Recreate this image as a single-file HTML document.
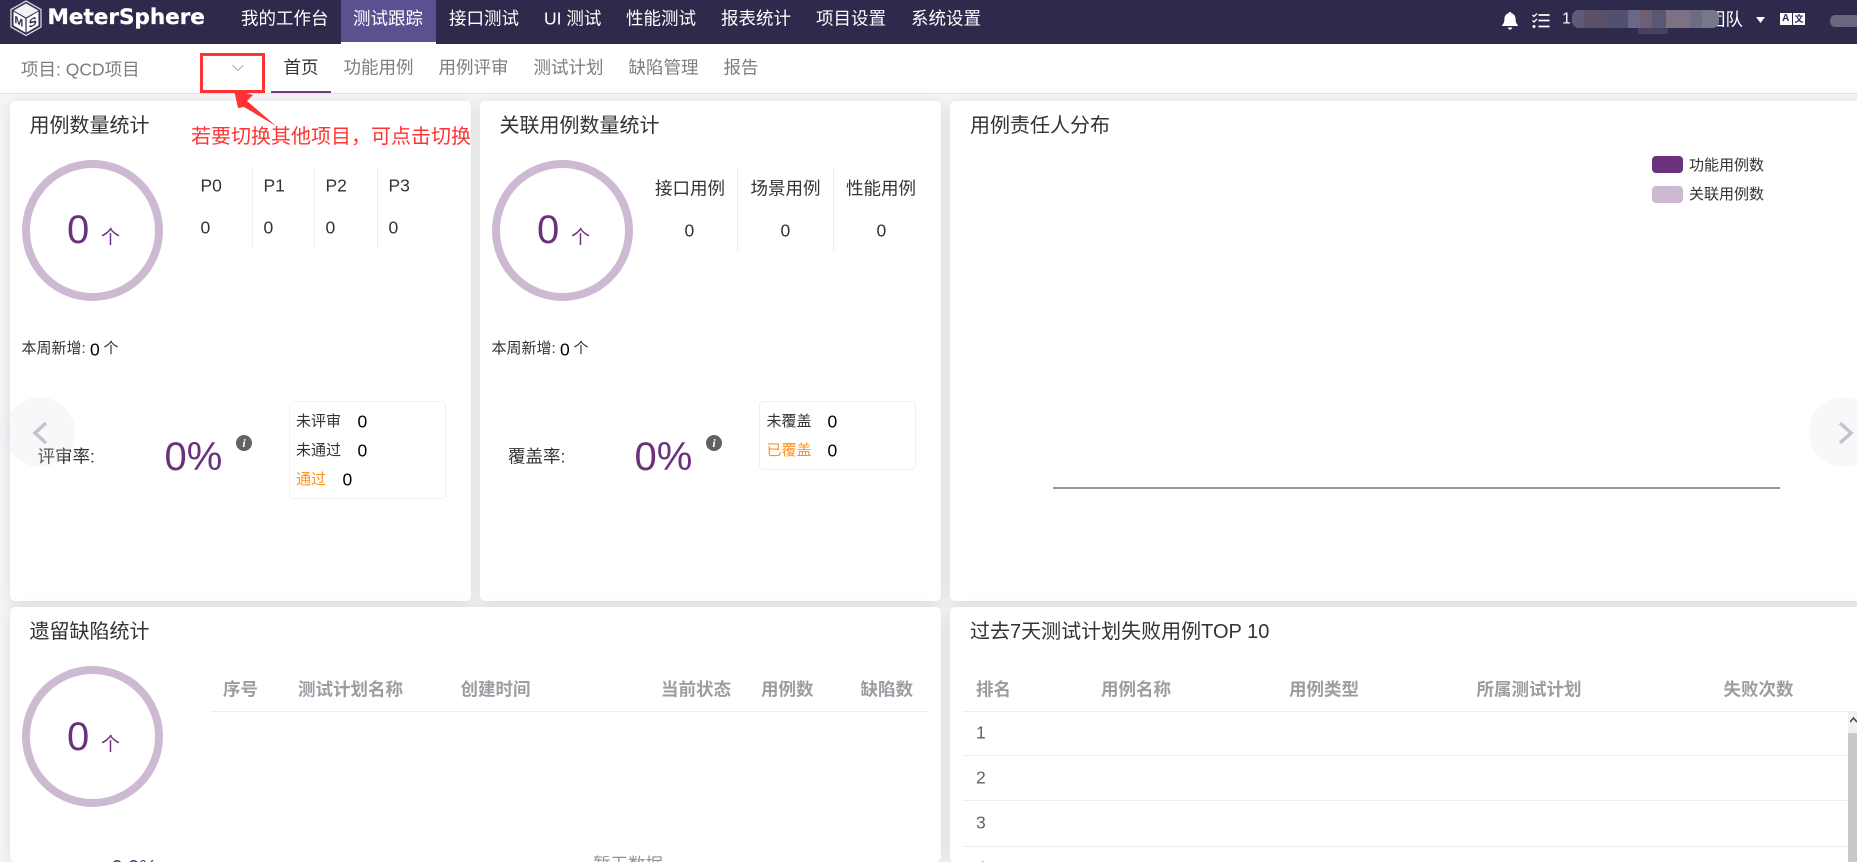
<!DOCTYPE html>
<html lang="zh-CN">
<head>
<meta charset="utf-8">
<title>MeterSphere</title>
<style>
html,body{margin:0;padding:0;width:1857px;height:862px;overflow:hidden;background:#f5f5f7;}
body{font-family:"Liberation Sans","Noto Sans CJK SC",sans-serif;font-size:17.5px;color:#333;}
#root{position:absolute;left:0;top:0;width:1857px;height:862px;overflow:hidden;background:#f5f5f7;}
.t{position:absolute;white-space:nowrap;transform:translateY(-50%);line-height:1.2;}
.b{position:absolute;}
.hd{left:0;top:0;width:1857px;height:44px;background:#2e2a4b;}
.n{color:#fff;font-size:17.5px;top:18.5px;}
.sub{left:0;top:44px;width:1857px;height:49px;background:#fff;border-bottom:1px solid #e4e4e7;}
.g{color:#7d7d82;}
.card{background:#fff;border-radius:5px;box-shadow:0 2.5px 15px rgba(0,0,0,.1);}
.ti{font-size:20px;color:#333;}
.ring{width:125px;height:125px;border:8px solid #cdb9d2;border-radius:50%;}
.pp{color:#6c317c;}
.big{font-size:40px;color:#6c317c;}
.ge{font-size:19px;color:#6c317c;}
.dv{width:1px;background:#eeeef0;}
.sm{font-size:15px;color:#333;}
.v{font-size:17.5px;color:#000;}
.box{border:1px solid #efeff5;border-radius:5px;background:#fff;box-sizing:border-box;}
.or{font-size:15px;color:#f7931e;}
.th{font-weight:bold;color:#9b9da3;font-size:17.5px;top:689.5px;}
.ln{height:1px;background:#ebeef5;}
.i{width:16px;height:16px;border-radius:50%;background:#606266;color:#fff;text-align:center;font:italic bold 12px/16px "Liberation Serif",serif;}
.nav{width:70px;height:70px;border-radius:50%;background:rgba(225,225,232,.22);}
.bl{position:absolute;top:0;height:100%;}
</style>
</head>
<body>
<div id="root">
<!-- header -->
<div class="b hd"></div>
<div class="b" style="left:341px;top:0;width:95px;height:42px;background:#5a5290;"></div>
<div class="b" style="left:341px;top:42px;width:95px;height:2px;background:#fff;"></div>
<svg class="b" style="left:8px;top:0" width="36" height="37" viewBox="0 0 36 37">
<polygon points="18,1 33,9.500 33,27 18,35.500 3,27 3,9.500" fill="none" stroke="#d6d5de" stroke-width="1.300"/>
<polygon points="18,3.500 30.500,10.500 18,17.500 5.500,10.500" fill="#f2f1f5"/>
<polygon points="5.500,11.500 17.400,18.500 17.400,32.500 5.500,25.500" fill="#fff"/>
<polygon points="30.500,11.500 18.600,18.500 18.600,32.500 30.500,25.500" fill="#fff"/>
<text transform="matrix(1 .55 0 1 6.500 22.500)" font-family="Liberation Sans" font-weight="bold" font-size="10.500" fill="#2e2a4b">M</text>
<text transform="matrix(1 -.55 0 1 20.800 28.500)" font-family="Liberation Sans" font-weight="bold" font-size="12" fill="#2e2a4b">S</text>
</svg>
<span class="t" style="left:47.500px;top:17.500px;color:#fff;font-family:'DejaVu Sans',sans-serif;font-weight:bold;font-size:21.500px;-webkit-text-stroke:.35px #fff;">MeterSphere</span>
<span class="t n" style="left:241px">我的工作台</span>
<span class="t n" style="left:353px">测试跟踪</span>
<span class="t n" style="left:449px">接口测试</span>
<span class="t n" style="left:544px">UI 测试</span>
<span class="t n" style="left:626px">性能测试</span>
<span class="t n" style="left:721px">报表统计</span>
<span class="t n" style="left:816px">项目设置</span>
<span class="t n" style="left:911px">系统设置</span>

<svg class="b" style="left:1501px;top:11px" width="18" height="20" viewBox="0 0 18 20"><path d="M9 1c.8 0 1.4.6 1.4 1.3 2.7.7 4.2 3 4.2 5.7 0 3 .7 4.6 2.4 6.200v.8H1v-.8C2.700 12.600 3.400 11 3.400 8c0-2.700 1.500-5 4.200-5.700C7.600 1.600 8.200 1 9 1zM6.800 16.500h4.400C11 17.800 10.100 18.600 9 18.600S7 17.800 6.800 16.500z" fill="#fff"/></svg>
<svg class="b" style="left:1531px;top:12px" width="19" height="17" viewBox="0 0 19 17"><path d="M1.500 3l1.500 1.500L6 1.500M1.500 8.500L3 10l3-3" fill="none" stroke="#fff" stroke-width="1.300"/><circle cx="3" cy="14.500" r="1.500" fill="#fff"/><path d="M7.500 3h11M7.500 8.500h11M7.500 14.500h11" stroke="#fff" stroke-width="1.700"/></svg>
<span class="t" style="left:1562px;top:19px;color:#fff;font-size:16px;">1</span>
<span class="t" style="left:1708px;top:19.500px;color:#fff;font-size:17.500px;">团队</span>
<div class="b" style="left:1638px;top:24px;width:30px;height:10px;background:#454160;"></div>
<div class="b" style="left:1572px;top:10px;width:147px;height:18px;background:#5f5b77;border-radius:7px;overflow:hidden;">
<div class="bl" style="left:12px;width:22px;background:#5c5066"></div>
<div class="bl" style="left:34px;width:22px;background:#534f6e"></div>
<div class="bl" style="left:56px;width:12px;background:#6a6888"></div>
<div class="bl" style="left:68px;width:12px;background:#6e5f72"></div>
<div class="bl" style="left:80px;width:14px;background:#5a5674"></div>
<div class="bl" style="left:94px;width:24px;background:#7c7284"></div>
<div class="bl" style="left:118px;width:12px;background:#6e6c82"></div>
<div class="bl" style="left:130px;width:17px;background:#77778a"></div>
</div>
<svg class="b" style="left:1755px;top:16px" width="11" height="8" viewBox="0 0 11 8"><polygon points="1,1 10,1 5.500,7" fill="#fff"/></svg>
<div class="b" style="left:1780px;top:13px;width:11.500px;height:12px;background:#fff;color:#2e2a4b;font:bold 10px/12px 'Liberation Sans';text-align:center;">A</div>
<div class="b" style="left:1793px;top:13px;width:12px;height:12px;background:#fff;color:#2e2a4b;font:bold 9px/12px 'Noto Sans CJK SC';text-align:center;">文</div>
<div class="b" style="left:1830px;top:15px;width:27px;height:12px;background:#6a667f;border-radius:5px 0 0 5px;"></div>

<!-- subheader -->
<div class="b sub"></div>
<span class="t g" style="left:21px;top:70px">项目: QCD项目</span>
<span class="t" style="left:283.500px;top:68px;color:#333">首页</span>
<div class="b" style="left:271px;top:91px;width:60px;height:2px;background:#783887;"></div>
<span class="t g" style="left:343.500px;top:68px">功能用例</span>
<span class="t g" style="left:438.500px;top:68px">用例评审</span>
<span class="t g" style="left:533.500px;top:68px">测试计划</span>
<span class="t g" style="left:628.500px;top:68px">缺陷管理</span>
<span class="t g" style="left:723.500px;top:68px">报告</span>

<!-- card 1 -->
<div class="b card" style="left:10px;top:101px;width:460.500px;height:500px;"></div>
<span class="t ti" style="left:29.500px;top:125.500px">用例数量统计</span>
<div class="b ring" style="left:22px;top:160px"></div>
<span class="t big" style="left:67px;top:230px">0</span>
<span class="t ge" style="left:101px;top:239px">个</span>
<span class="t" style="left:200.500px;top:186px">P0</span>
<span class="t" style="left:263.500px;top:186px">P1</span>
<span class="t" style="left:325.500px;top:186px">P2</span>
<span class="t" style="left:388.500px;top:186px">P3</span>
<span class="t" style="left:200.500px;top:228px">0</span>
<span class="t" style="left:263.500px;top:228px">0</span>
<span class="t" style="left:325.500px;top:228px">0</span>
<span class="t" style="left:388.500px;top:228px">0</span>
<div class="b dv" style="left:252px;top:166px;height:83px"></div>
<div class="b dv" style="left:314px;top:166px;height:83px"></div>
<div class="b dv" style="left:377px;top:166px;height:83px"></div>
<span class="t sm" style="left:21.500px;top:349px">本周新增:</span>
<span class="t v" style="left:90px;top:350px">0</span>
<span class="t sm" style="left:103.500px;top:349px">个</span>
<span class="t" style="left:37.500px;top:457px">评审率:</span>
<span class="t big" style="left:164.500px;top:457px">0%</span>
<div class="b i" style="left:236px;top:435px">i</div>
<div class="b box" style="left:289px;top:401px;width:157px;height:98px"></div>
<span class="t sm" style="left:296px;top:421.500px">未评审</span><span class="t v" style="left:357.500px;top:422px">0</span>
<span class="t sm" style="left:296px;top:450.500px">未通过</span><span class="t v" style="left:357.500px;top:451px">0</span>
<span class="t or" style="left:296px;top:479.500px">通过</span><span class="t v" style="left:342.500px;top:480px">0</span>

<!-- card 2 -->
<div class="b card" style="left:480px;top:101px;width:461px;height:500px;"></div>
<span class="t ti" style="left:499.500px;top:125.500px">关联用例数量统计</span>
<div class="b ring" style="left:492px;top:160px"></div>
<span class="t big" style="left:537px;top:230px">0</span>
<span class="t ge" style="left:571px;top:239px">个</span>
<span class="t" style="left:655px;top:188.500px">接口用例</span>
<span class="t" style="left:750.500px;top:188.500px">场景用例</span>
<span class="t" style="left:846px;top:188.500px">性能用例</span>
<span class="t" style="left:684.500px;top:230.500px">0</span>
<span class="t" style="left:780.500px;top:230.500px">0</span>
<span class="t" style="left:876.500px;top:230.500px">0</span>
<div class="b dv" style="left:737px;top:166px;height:86px"></div>
<div class="b dv" style="left:832.500px;top:166px;height:86px"></div>
<span class="t sm" style="left:491.500px;top:349px">本周新增:</span>
<span class="t v" style="left:560px;top:350px">0</span>
<span class="t sm" style="left:573.500px;top:349px">个</span>
<span class="t" style="left:508px;top:457px">覆盖率:</span>
<span class="t big" style="left:634.500px;top:457px">0%</span>
<div class="b i" style="left:706px;top:435px">i</div>
<div class="b box" style="left:759px;top:401px;width:157px;height:69px"></div>
<span class="t sm" style="left:766.500px;top:421.500px">未覆盖</span><span class="t v" style="left:827.500px;top:422px">0</span>
<span class="t or" style="left:766.500px;top:450.500px">已覆盖</span><span class="t v" style="left:827.500px;top:451px">0</span>

<!-- card 3 -->
<div class="b card" style="left:950px;top:101px;width:930px;height:500px;"></div>
<span class="t ti" style="left:970px;top:125.500px">用例责任人分布</span>
<div class="b" style="left:1652px;top:156px;width:31px;height:17px;background:#6c317c;border-radius:4px;"></div>
<span class="t sm" style="left:1689px;top:165.500px">功能用例数</span>
<div class="b" style="left:1652px;top:186px;width:31px;height:17px;background:#cdb9d2;border-radius:4px;"></div>
<span class="t sm" style="left:1689px;top:195px">关联用例数</span>
<div class="b" style="left:1053px;top:487px;width:727px;height:1.500px;background:#94959f;"></div>

<!-- card 4 -->
<div class="b card" style="left:10px;top:607px;width:931px;height:255px;"></div>
<span class="t ti" style="left:29.500px;top:631.500px">遗留缺陷统计</span>
<div class="b ring" style="left:22px;top:666px"></div>
<span class="t big" style="left:67px;top:736.500px">0</span>
<span class="t ge" style="left:101px;top:745.500px">个</span>
<span class="t th" style="left:223px">序号</span>
<span class="t th" style="left:298px">测试计划名称</span>
<span class="t th" style="left:460.500px">创建时间</span>
<span class="t th" style="left:661px">当前状态</span>
<span class="t th" style="left:761px">用例数</span>
<span class="t th" style="left:860.500px">缺陷数</span>
<div class="b ln" style="left:211px;top:711px;width:717px"></div>
<span class="t pp" style="left:111.500px;top:868px;font-size:20px;">0.0%</span>
<span class="t" style="left:593px;top:865px;color:#909399;">暂无数据</span>

<!-- card 5 -->
<div class="b card" style="left:950px;top:607px;width:930px;height:255px;"></div>
<span class="t ti" style="left:970px;top:631.500px">过去7天测试计划失败用例TOP 10</span>
<span class="t th" style="left:976px">排名</span>
<span class="t th" style="left:1101px">用例名称</span>
<span class="t th" style="left:1289px">用例类型</span>
<span class="t th" style="left:1476.500px">所属测试计划</span>
<span class="t th" style="left:1723.500px">失败次数</span>
<div class="b ln" style="left:963px;top:711px;width:894px"></div>
<span class="t" style="left:976px;top:733px;color:#606266">1</span>
<div class="b ln" style="left:963px;top:755px;width:885px"></div>
<span class="t" style="left:976px;top:778px;color:#606266">2</span>
<div class="b ln" style="left:963px;top:800px;width:885px"></div>
<span class="t" style="left:976px;top:823px;color:#606266">3</span>
<div class="b ln" style="left:963px;top:845.500px;width:885px"></div>
<span class="t" style="left:976px;top:868px;color:#606266">4</span>
<div class="b" style="left:1848px;top:712px;width:9px;height:21px;background:#f1f1f1;"></div>
<svg class="b" style="left:1850px;top:717px" width="7" height="6" viewBox="0 0 7 6"><path d="M0 5L3.500 1L7 5" fill="none" stroke="#444" stroke-width="1.500"/></svg>
<div class="b" style="left:1848px;top:733px;width:9px;height:129px;background:#c9c9c9;"></div>

<!-- carousel arrows -->
<div class="b nav" style="left:5px;top:397px"></div>
<svg class="b" style="left:30px;top:420px" width="20" height="26" viewBox="0 0 20 26"><path d="M16 3L5 13L16 23" fill="none" stroke="#c0c4cc" stroke-width="3.500"/></svg>
<div class="b nav" style="left:1809px;top:397px"></div>
<svg class="b" style="left:1836px;top:420px" width="20" height="26" viewBox="0 0 20 26"><path d="M4 3L15 13L4 23" fill="none" stroke="#c0c4cc" stroke-width="3.500"/></svg>

<!-- annotation -->
<div class="b" style="left:200px;top:53px;width:65px;height:40px;border:3px solid #f33;box-sizing:border-box;"></div>
<svg class="b" style="left:230px;top:62px" width="16" height="12" viewBox="0 0 16 12"><path d="M2.500 3L8 8.500L13.500 3" fill="none" stroke="#a9acb3" stroke-width="1"/></svg>
<svg class="b" style="left:228px;top:86px" width="52" height="44" viewBox="228 86 52 44"><polygon points="234,90 253,95 247,101 276,126 244,107 238,108" fill="#f33"/></svg>
<span class="t" style="left:191px;top:137px;color:#f33;font-size:20px;">若要切换其他项目，可点击切换</span>
</div>
</body>
</html>
